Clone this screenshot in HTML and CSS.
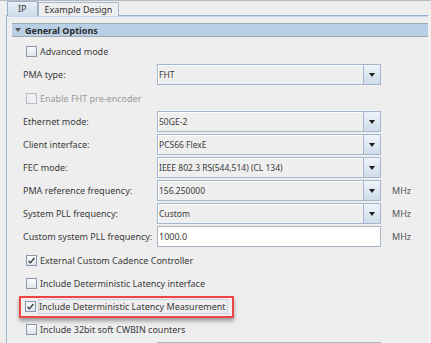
FILE: index.html
```html
<!DOCTYPE html>
<html lang="en">
<head>
<meta charset="UTF-8">
<meta name="viewport" content="width=device-width, initial-scale=1.0">
<title>IP Parameters</title>
<link rel="stylesheet" href="styles.css">
</head>
<body>
<!-- Tab strip -->
<div class="tabs">
    <div class="tab active">IP</div>
    <div class="tab">Example Design</div>
</div>

<div class="panel">
    <div class="section-head"><span class="tri"></span>General Options</div>

    <div class="form">
        <div class="row check-row">
            <span class="box"></span><span class="check-label">Advanced mode</span>
        </div>
        <div class="row">
            <span class="label">PMA type:</span>
            <div class="select"><span class="value">FHT</span><span class="drop"><span class="arrow"></span></span></div>
        </div>
        <div class="row check-row tall">
            <span class="box disabled"></span><span class="check-label disabled">Enable FHT pre-encoder</span>
        </div>
        <div class="row">
            <span class="label">Ethernet mode:</span>
            <div class="select"><span class="value">50GE-2</span><span class="drop"><span class="arrow"></span></span></div>
        </div>
        <div class="row">
            <span class="label">Client interface:</span>
            <div class="select"><span class="value">PCS66 FlexE</span><span class="drop"><span class="arrow"></span></span></div>
        </div>
        <div class="row">
            <span class="label">FEC mode:</span>
            <div class="select"><span class="value">IEEE 802.3 RS(544,514) (CL 134)</span><span class="drop"><span class="arrow"></span></span></div>
        </div>
        <div class="row">
            <span class="label">PMA reference frequency:</span>
            <div class="select"><span class="value">156.250000</span><span class="drop"><span class="arrow"></span></span></div>
            <span class="unit">MHz</span>
        </div>
        <div class="row">
            <span class="label">System PLL frequency:</span>
            <div class="select"><span class="value">Custom</span><span class="drop"><span class="arrow"></span></span></div>
            <span class="unit">MHz</span>
        </div>
        <div class="row">
            <span class="label">Custom system PLL frequency:</span>
            <div class="text-input">1000.0</div>
            <span class="unit">MHz</span>
        </div>
        <div class="row check-row tall">
            <span class="box checked"><svg viewBox="0 0 11 11" width="11" height="11"><path d="M2.6 5.9 L4.4 7.8 L8.4 3" fill="none" stroke="#333333" stroke-width="1.3"/></svg></span>
            <span class="check-label">External Custom Cadence Controller</span>
        </div>
        <div class="row check-row">
            <span class="box"></span><span class="check-label">Include Deterministic Latency interface</span>
        </div>
        <div class="row check-row">
            <span class="highlight">
                <span class="box checked"><svg viewBox="0 0 11 11" width="11" height="11"><path d="M2.6 5.9 L4.4 7.8 L8.4 3" fill="none" stroke="#333333" stroke-width="1.3"/></svg></span>
                <span class="check-label focused">Include Deterministic Latency Measurement</span>
            </span>
        </div>
        <div class="row check-row">
            <span class="box"></span><span class="check-label">Include 32bit soft CWBIN counters</span>
        </div>
        <div class="row">
            <span class="label"></span>
            <div class="select"><span class="value"></span><span class="drop"><span class="arrow"></span></span></div>
        </div>
    </div>
</div>
</body>
</html>
```

FILE: styles.css
```css
/* Page */
body {
    margin: 0;
    padding: 0;
    width: 431px;
    height: 343px;
    overflow: hidden;
    background-color: #eeeeee;
    color: #3a3a3a;
    font-family: "Noto Sans", "DejaVu Sans", sans-serif;
    font-size: 9px;
    border-top: 1px solid #b4bac3;
    box-sizing: border-box;
}
/* Tabs */
.tabs {
    display: flex;
    height: 14px;
    padding-left: 7px;
}
.tab {
    height: 13px;
    padding: 0 6px;
    margin-top: 1px;
    line-height: 13px;
    border: 1px solid #a9b6c6;
    border-bottom: none;
    background-color: #eeeeee;
    color: #333333;
}
.tab.active {
    margin-top: 0;
    height: 14px;
    padding: 0 10px;
    background: linear-gradient(#e6eef7, #cfdcea);
    border-color: #9fb1c8;
}
/* Tab content */
.panel {
    margin-left: 6px;
    margin-right: 2px;
    height: 327px;
    overflow: hidden;
    border-left: 1px solid #a3b6cf;
    border-right: 1px solid #f6f6f6;
    border-top: 1px solid #94add3;
    box-shadow: inset 0 1px 0 #c9d8ec;
}
.section-head {
    display: flex;
    align-items: center;
    margin: 7px 0 0 5px;
    height: 12px;
    border-top: 1px solid #a3a8ad;
    border-bottom: 1px solid #a3a8ad;
    background-color: #b8cfe5;
    font-weight: bold;
    color: #2c2c2c;
    padding-left: 3px;
}
.tri {
    width: 0;
    height: 0;
    border-left: 3px solid transparent;
    border-right: 3px solid transparent;
    border-top: 4px solid #555555;
    margin-right: 4px;
}
/* Form rows */
.form {
    padding-top: 3px;
    padding-left: 16px;
}
.row {
    display: flex;
    align-items: center;
    height: 23px;
    white-space: nowrap;
}
.row.tall {
    height: 24px;
}
.check-row {
    padding-left: 3px;
}
.label {
    width: 134px;
    flex: none;
}
.select, .text-input {
    width: 222px;
    height: 19px;
    flex: none;
    display: flex;
    align-items: center;
    border: 1px solid #a4b7cc;
    background-color: #efefef;
    box-shadow: inset 1px 1px 0 #ffffff;
}
.text-input {
    background-color: #ffffff;
    padding-left: 1px;
    width: 221px;
    box-shadow: none;
    border-color: #a8b5c4;
}
.value {
    flex: 1;
    padding-left: 1px;
    overflow: hidden;
    font-size: 8.5px;
}
.drop {
    width: 16px;
    height: 19px;
    display: flex;
    align-items: center;
    justify-content: center;
    border-left: 1px solid #a4b7cc;
    background: linear-gradient(#eef3f8, #cfdcea);
}
.arrow {
    width: 0;
    height: 0;
    border-left: 3.5px solid transparent;
    border-right: 3.5px solid transparent;
    border-top: 4px solid #1f1f1f;
}
.unit {
    margin-left: 11px;
    color: #555555;
}
/* Checkboxes */
.box {
    width: 11px;
    height: 11px;
    flex: none;
    border: 1px solid #8896aa;
    background: linear-gradient(#fbfcfd, #dde4ec);
    box-sizing: border-box;
    display: flex;
    align-items: center;
    justify-content: center;
}
.box svg {
    flex: none;
}
.box.disabled {
    border-color: #b3bcc7;
    background: #f0f0f0;
}
.check-label {
    margin-left: 3px;
}
.check-label.disabled {
    color: #9a9a9a;
}
.check-label.focused {
    outline: 1px solid #c6d3e2;
    outline-offset: 0;
    padding-right: 1px;
}
/* Red annotation box */
.highlight {
    display: inline-flex;
    align-items: center;
    height: 18px;
    margin-left: -7px;
    padding: 0 5px 0 4px;
    border: 2px solid #ee4444;
    box-shadow: 0 3px 4px rgba(0, 0, 0, 0.35);
}
```
